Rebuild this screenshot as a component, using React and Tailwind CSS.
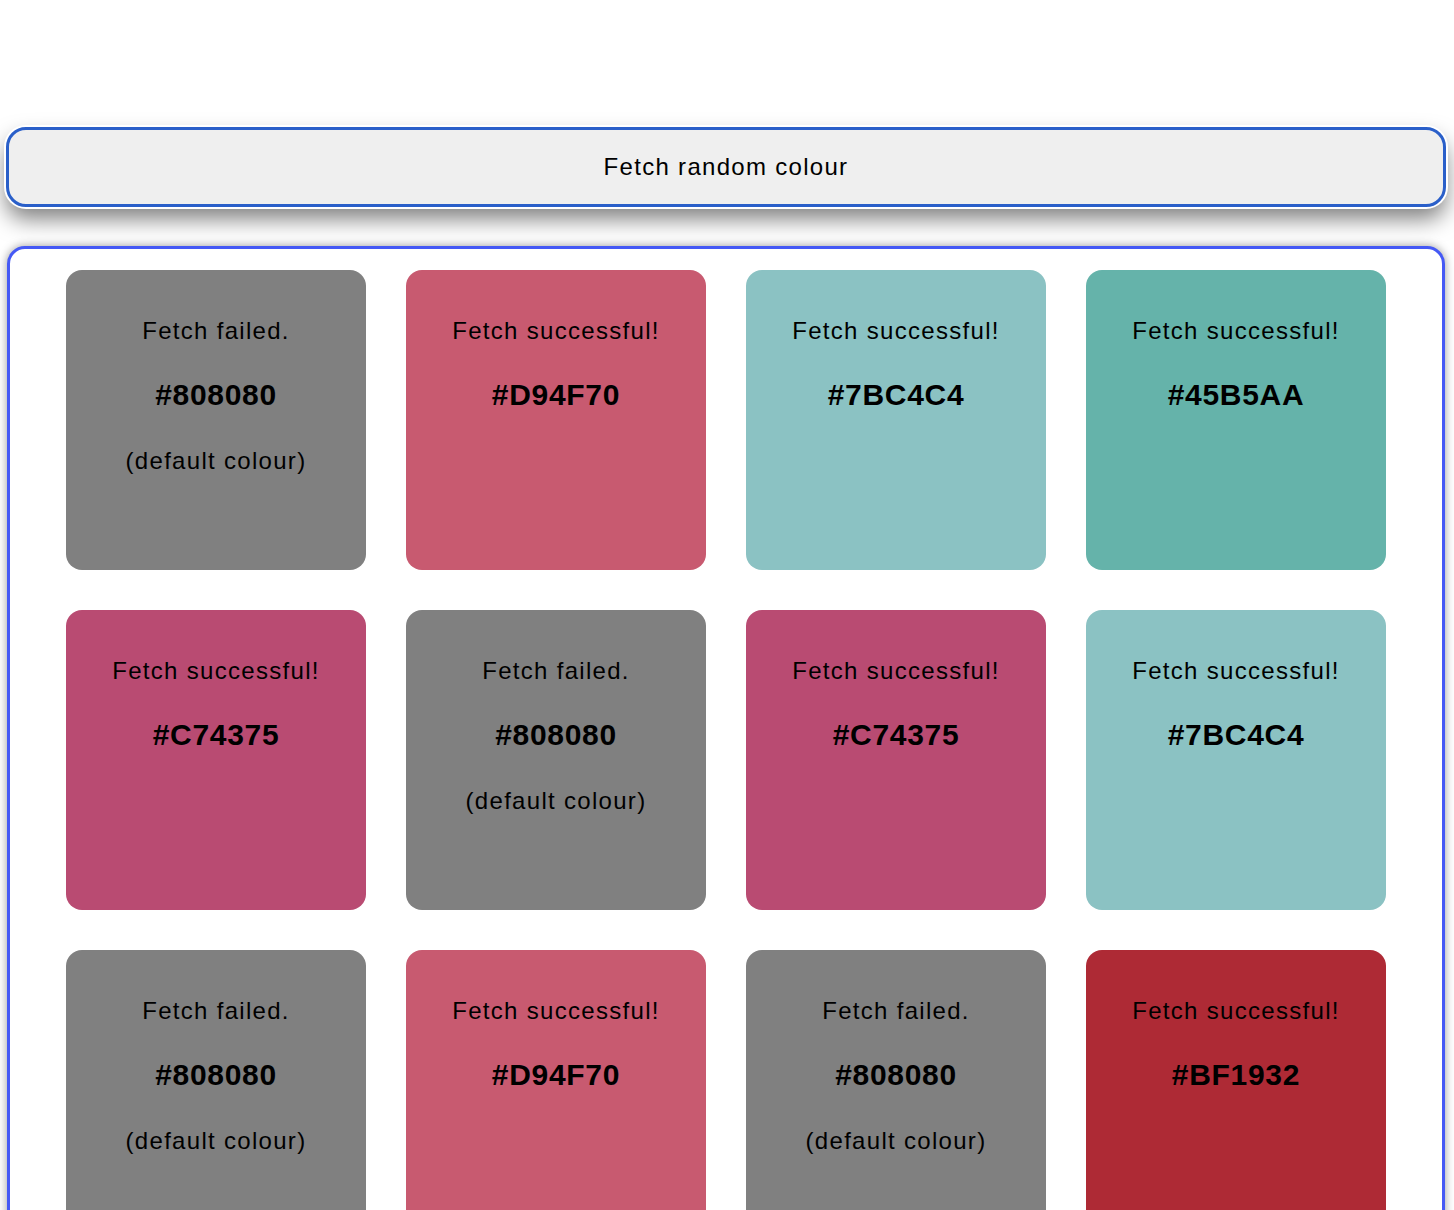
import React from 'react';

const cards = [
    { ok: false, hex: '#808080', bg: 'bg-[#808080]' },
    { ok: true, hex: '#D94F70', bg: 'bg-[#c85a70]' },
    { ok: true, hex: '#7BC4C4', bg: 'bg-[#8bc2c3]' },
    { ok: true, hex: '#45B5AA', bg: 'bg-[#65b3aa]' },
    { ok: true, hex: '#C74375', bg: 'bg-[#b94b72]' },
    { ok: false, hex: '#808080', bg: 'bg-[#808080]' },
    { ok: true, hex: '#C74375', bg: 'bg-[#b94b72]' },
    { ok: true, hex: '#7BC4C4', bg: 'bg-[#8bc2c3]' },
    { ok: false, hex: '#808080', bg: 'bg-[#808080]' },
    { ok: true, hex: '#D94F70', bg: 'bg-[#c85a70]' },
    { ok: false, hex: '#808080', bg: 'bg-[#808080]' },
    { ok: true, hex: '#BF1932', bg: 'bg-[#ae2a35]' },
];

function ColourCard({ card }) {
    return (
        <div className={`w-[300px] h-[300px] rounded-[16px] ${card.bg} flex flex-col items-center pt-[47px] text-black`}>
            <p className="text-[24px] leading-[28px] tracking-[1.3px]">
                {card.ok ? 'Fetch successful!' : 'Fetch failed.'}
            </p>
            <p className="text-[30px] leading-[36px] font-bold tracking-[0.7px] mt-[32px]">{card.hex}</p>
            {!card.ok && <p className="text-[24px] leading-[28px] tracking-[1.3px] mt-[34px]">(default colour)</p>}
        </div>
    );
}

export default function App() {
    return (
        <div
            className="min-h-screen bg-white pt-[127px] pl-[6px] pr-[8px] pb-[40px]"
            style={{ fontFamily: '"Liberation Sans", Arial, sans-serif' }}
        >
            <button className="w-full h-[80px] bg-[#efefef] border-[3px] border-[#2a5fc9] rounded-[20px] text-[24px] tracking-[1.3px] text-black shadow-[0_0_0_2px_#fff,0_12px_22px_rgba(0,0,0,0.5)]">
                Fetch random colour
            </button>

            <div className="mt-[39px] mx-[1px] border-[3px] border-[#4559f5] rounded-[18px] bg-white pt-[21px] pb-[40px] shadow-[0_0_10px_rgba(0,0,0,0.4)]">
                <div className="grid grid-cols-[repeat(4,300px)] gap-[40px] justify-center">
                    {cards.map((card, i) => (
                        <ColourCard key={i} card={card} />
                    ))}
                </div>
            </div>
        </div>
    );
}
